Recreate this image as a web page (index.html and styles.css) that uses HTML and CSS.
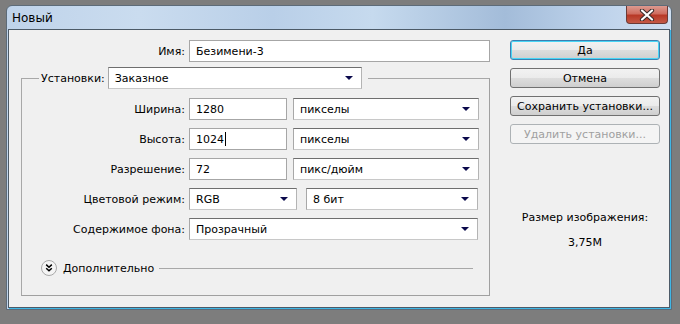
FILE: index.html
```html
<!DOCTYPE html>
<html lang="ru">
<head>
    <meta charset="UTF-8">
    <title>Новый</title>
    <link rel="stylesheet" href="styles.css">
</head>
<body>
    <div class="window">
        <div class="titlebar">
            <span class="title">Новый</span>
            <div class="close-btn">
                <svg width="18" height="12" viewBox="0 0 18 12">
                    <path d="M4 1.5 L14 10.5 M14 1.5 L4 10.5" stroke="#3a2a2a" stroke-width="4.2" stroke-linecap="round"/>
                    <path d="M4 1.5 L14 10.5 M14 1.5 L4 10.5" stroke="#ffffff" stroke-width="2.2" stroke-linecap="round"/>
                </svg>
            </div>
        </div>

        <div class="client">
            <div class="main">
                <div class="name-row">
                    <label class="lbl">Имя:</label>
                    <div class="field name-field">Безимени-3</div>
                </div>

                <fieldset class="presets">
                    <legend>
                        <span class="legend-lbl">Установки:</span>
                        <div class="select preset-select">Заказное</div>
                    </legend>

                    <div class="row">
                        <label class="lbl">Ширина:</label>
                        <div class="field num">1280</div>
                        <div class="select unit">пикселы</div>
                    </div>
                    <div class="row">
                        <label class="lbl">Высота:</label>
                        <div class="field num">1024<span class="caret"></span></div>
                        <div class="select unit">пикселы</div>
                    </div>
                    <div class="row">
                        <label class="lbl">Разрешение:</label>
                        <div class="field num">72</div>
                        <div class="select unit">пикс/дюйм</div>
                    </div>
                    <div class="row">
                        <label class="lbl">Цветовой режим:</label>
                        <div class="select mode">RGB</div>
                        <div class="select bits">8 бит</div>
                    </div>
                    <div class="row">
                        <label class="lbl">Содержимое фона:</label>
                        <div class="select bg">Прозрачный</div>
                    </div>

                    <div class="advanced">
                        <span class="expand-icon">
                            <svg width="16" height="16" viewBox="0 0 16 16">
                                <circle cx="8" cy="8" r="7.5" fill="#f4f4f4" stroke="#a8a8a8"/>
                                <path d="M5.2 4.6 L8 7.2 L10.8 4.6 M5.2 8.2 L8 10.8 L10.8 8.2" fill="none" stroke="#000" stroke-width="1.5"/>
                            </svg>
                        </span>
                        <span class="adv-text">Дополнительно</span>
                        <span class="adv-line"></span>
                    </div>
                </fieldset>
            </div>

            <div class="side">
                <button class="btn default">Да</button>
                <button class="btn">Отмена</button>
                <button class="btn">Сохранить установки...</button>
                <button class="btn" disabled>Удалить установки...</button>

                <div class="size-info">
                    <p class="size-label">Размер изображения:</p>
                    <p class="size-value">3,75M</p>
                </div>
            </div>
        </div>
    </div>
</body>
</html>
```

FILE: styles.css
```css
body {
    margin: 0;
    padding: 5px 0 0 6px;
    background-color: #7d7d7d;
    font-family: "DejaVu Sans", Tahoma, sans-serif;
    font-size: 11px;
    color: #000;
}

.window {
    width: 666px;
    height: 305px;
    box-sizing: border-box;
    border: 1px solid #5d6b78;
    border-radius: 6px 6px 0 0;
    background: linear-gradient(90deg, #bfd3ea 0%, #cadcef 20%, #b9cfe8 40%, #c6daee 55%, #a3bcd9 75%, #bcd1ea 88%, #cfdff1 100%);
    display: flex;
    flex-direction: column;
}

/* title bar */
.titlebar {
    height: 23px;
    display: flex;
    align-items: flex-start;
    justify-content: space-between;
}

.title {
    font-size: 12px;
    padding: 5px 0 0 5px;
}

.close-btn {
    width: 40px;
    height: 17px;
    margin-right: 3px;
    border: 1px solid #6b3a36;
    border-top: none;
    border-radius: 0 0 4px 4px;
    background: linear-gradient(180deg, #dc9a90 0%, #cf6d5f 45%, #b83826 55%, #c45a46 100%);
    display: flex;
    justify-content: center;
    align-items: center;
}

/* client area */
.client {
    flex: 1;
    margin: 0 1px 1px 1px;
    background-color: #f0f0f0;
    border: 1px solid #4c5a67;
    box-shadow: 1px 1px 0 #3fb7e6;
    display: flex;
    padding: 10px 0 0 12px;
}

.main {
    width: 473px;
}

.lbl {
    text-align: right;
    padding-right: 4px;
    flex-shrink: 0;
}

.name-row {
    display: flex;
    align-items: center;
}

.name-row .lbl {
    width: 164px;
}

.field,
.select {
    box-sizing: border-box;
    height: 22px;
    background-color: #fff;
    border: 1px solid #a6a6a6;
    padding: 0 6px;
    display: flex;
    align-items: center;
    font-size: 11px;
}

.select {
    position: relative;
    border-color: #6e6e6e #b4b4b4 #c8c8c8 #a8a8a8;
}

.select::after {
    content: "";
    position: absolute;
    right: 8px;
    top: 8px;
    border-left: 4px solid transparent;
    border-right: 4px solid transparent;
    border-top: 4px solid #0b0a4c;
}

.name-field {
    width: 301px;
}

/* presets group */
.presets {
    margin: 5px 0 0 0;
    padding: 0 0 19px 0;
    width: 469px;
    box-sizing: border-box;
    border: 1px solid #a0a0a0;
    border-color: #a8a8a8 #a0a0a0 #a0a0a0 #a8a8a8;
}

.presets legend {
    margin-left: 17px;
    padding: 0 6px 0 2px;
    display: flex;
    align-items: center;
}

.legend-lbl {
    padding-right: 3px;
}

.preset-select {
    width: 254px;
}

.row {
    display: flex;
    align-items: center;
    margin-top: 8px;
}

.row:first-of-type {
    margin-top: 9px;
}

.row .lbl {
    width: 163px;
}

.num {
    width: 98px;
    margin-right: 6px;
}

.caret {
    display: inline-block;
    width: 1px;
    height: 14px;
    background-color: #000;
    margin-left: 1px;
}

.unit {
    width: 186px;
}

.mode {
    width: 108px;
    margin-right: 9px;
}

.bits {
    width: 172px;
}

.bg {
    width: 289px;
}

.advanced {
    display: flex;
    align-items: center;
    margin: 20px 16px 0 19px;
}

.expand-icon {
    display: flex;
    margin-right: 6px;
}

.adv-line {
    flex: 1;
    height: 1px;
    background-color: #a8a8a8;
    margin-left: 5px;
}

/* buttons column */
.side {
    margin-left: 16px;
    width: 150px;
    display: flex;
    flex-direction: column;
}

.btn {
    height: 20px;
    margin-bottom: 8px;
    font-family: inherit;
    font-size: 11px;
    color: #000;
    border: 1px solid #707070;
    border-radius: 3px;
    background: linear-gradient(180deg, #f2f2f2 0%, #ebebeb 50%, #dddddd 51%, #cfcfcf 100%);
    padding: 0;
}

.btn.default {
    border-color: #3c7fb1;
    box-shadow: inset 0 0 0 1px #48d5f5;
}

.btn:disabled {
    color: #a0a0a0;
    border-color: #adb2b5;
    background: #f4f4f4;
}

.size-info {
    margin-top: 59px;
    text-align: center;
    font-size: 11px;
}

.size-info p {
    margin: 0;
}

.size-value {
    margin-top: 12px !important;
}
```
